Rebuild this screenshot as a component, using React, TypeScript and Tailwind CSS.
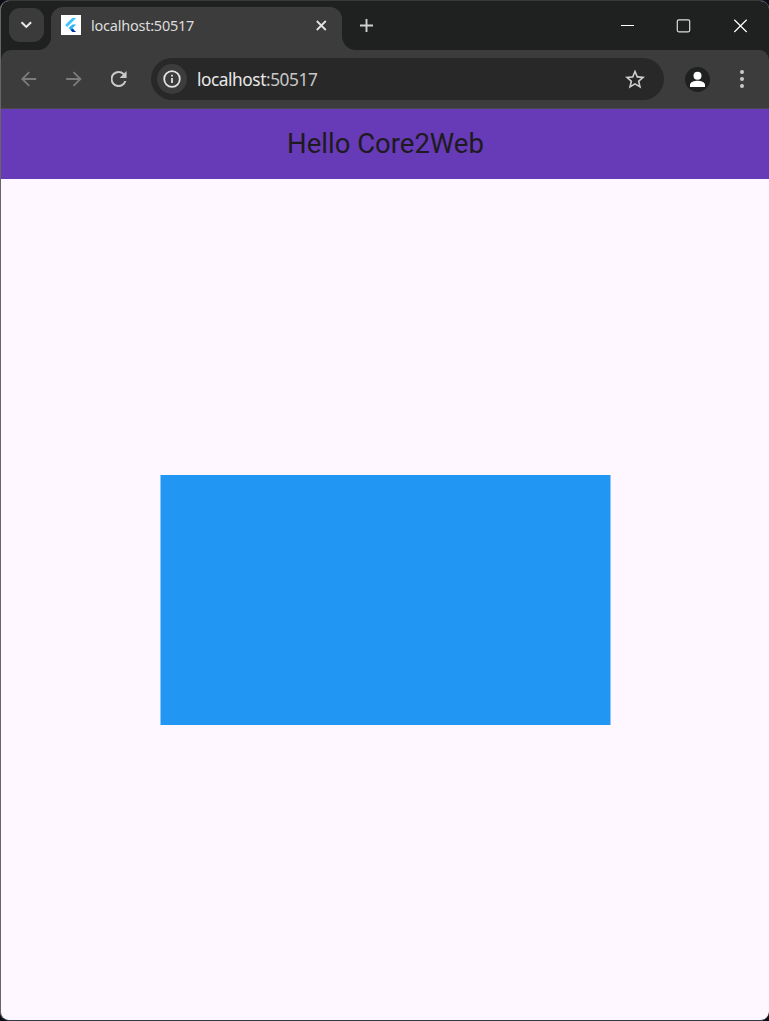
import React from 'react';

function FlutterLogo() {
  return (
    <div className="flex h-5 w-5 items-center justify-center bg-white">
      <svg width="20" height="20" viewBox="0 0 20 20">
        <path d="M4.2 10 11.2 3h4L6.2 12z" fill="#40c4ff" />
        <path d="M7.6 13.1 11.4 9.4h3.9l-3.8 3.7 1.9 1.9-1.9 1.9z" fill="#29b6f6" />
        <path d="m9.6 15.1 1.9-1.4 3.6 3.4h-3.7z" fill="#01359b" />
      </svg>
    </div>
  );
}

function TabStrip() {
  return (
    <div className="flex h-[49px] bg-[#1f2120]">
      <div className="ml-2 mt-[7px] flex h-[34px] w-[35px] items-center justify-center rounded-[11px] bg-[#3b3b3b]">
        <svg width="13" height="8" viewBox="0 0 13 8" fill="none" stroke="#e8e8e8" strokeWidth="2.1">
          <path d="m1.5 1.3 4.8 4.6 4.8-4.6" />
        </svg>
      </div>
      <svg className="-ml-1.5 self-end" width="13" height="13" viewBox="0 0 13 13">
        <path d="M13 0v13H0A13 13 0 0 0 13 0Z" fill="#3c3c3c" />
      </svg>
      <div className="mt-1.5 flex w-[291px] rounded-t-[12px] bg-[#3c3c3c]">
        <div className="ml-[10px] mt-2"><FlutterLogo /></div>
        <span className="ml-[10px] mt-2 flex-1 whitespace-nowrap font-['Noto_Sans',sans-serif] text-[14.5px] leading-[20px] tracking-[-0.23px] text-[#dcdcdc]">
          localhost:50517
        </span>
        <svg className="mr-[15px] mt-[13px]" width="11" height="11" viewBox="0 0 11 11" stroke="#e3e3e3" strokeWidth="1.8">
          <path d="m.8 1 9 9M9.8 1l-9 9" />
        </svg>
      </div>
      <svg className="self-end" width="14" height="14" viewBox="0 0 14 14">
        <path d="M0 0v14h14A14 14 0 0 1 0 0Z" fill="#3c3c3c" />
      </svg>
      <svg className="ml-1 mt-[18px]" width="13" height="13" viewBox="0 0 13 13" stroke="#d0d0d0" strokeWidth="1.9">
        <path d="M6.5 0v13M0 6.5h13" />
      </svg>
      <div className="ml-auto mr-[21px] mt-[17px] flex h-[15px] items-center gap-[42px]">
        <svg width="13" height="15" viewBox="0 0 13 15" stroke="#fff">
          <path d="M0 7.5h13" />
        </svg>
        <svg width="15" height="15" viewBox="0 0 15 15" fill="none" stroke="#dedede" strokeWidth="1.2">
          <rect x="1.3" y="1.8" width="12.4" height="12" rx="1.5" />
        </svg>
        <svg width="15" height="15" viewBox="0 0 15 15" stroke="#fff" strokeWidth="1.2">
          <path d="m1.3 1.8 12.4 12.2M13.7 1.8 1.3 14" />
        </svg>
      </div>
    </div>
  );
}

function Toolbar() {
  return (
    <div className="bg-[#1f2120]">
      <div className="flex h-[59px] items-center rounded-t-[10px] border-b border-[#4a4a4a] bg-[#3c3c3c]">
        <svg className="ml-5" width="16" height="16" viewBox="0 0 16 16" fill="none" stroke="#7c7c7c" strokeWidth="1.8">
          <path d="M15.2 8H1.5M8.2 1.1 1.3 8l6.9 6.9" />
        </svg>
        <svg className="ml-[29px]" width="16" height="16" viewBox="0 0 16 16" fill="none" stroke="#7c7c7c" strokeWidth="1.8">
          <path d="M.2 8h14.3M7.5 1.1 14.4 8l-6.9 6.9" />
        </svg>
        <svg className="ml-[29px]" width="16" height="16" viewBox="4.4 4 16 16" fill="#c9c9c9">
          <path d="M17.65 6.35A7.96 7.96 0 0 0 12 4a8 8 0 1 0 7.73 10h-2.08A6 6 0 1 1 12 6c1.66 0 3.14.69 4.22 1.78L13 11h7V4z" />
        </svg>
        <div className="ml-6 flex h-[42px] w-[513px] items-center rounded-full bg-[#282828]">
          <div className="ml-1.5 flex h-[30px] w-[30px] items-center justify-center rounded-full bg-[#3c3c3c]">
            <svg width="18" height="18" viewBox="0 0 18 18" fill="none" stroke="#e3e3e3" strokeWidth="1.8">
              <circle cx="9" cy="9" r="7.8" />
              <path d="M9 8v5M9 4.8v1.8" />
            </svg>
          </div>
          <div className="ml-[10px] flex-1 whitespace-nowrap pt-0.5 font-['Noto_Sans',sans-serif] text-[17.3px] leading-[24px] tracking-[-0.45px] text-[#e8e8e8]">
            localhost<span className="text-[#c7c7c7]">:50517</span>
          </div>
          <svg className="mr-[19px]" width="20" height="20" viewBox="2 1.5 20 20" fill="#cfcfcf">
            <path d="m22 9.24-7.19-.62L12 2 9.19 8.63 2 9.24l5.46 4.73L5.82 21 12 17.27 18.18 21l-1.63-7.03zM12 15.4l-3.76 2.27 1-4.28-3.32-2.88 4.38-.38L12 6.1l1.71 4.04 4.38.38-3.32 2.88 1 4.28z" />
          </svg>
        </div>
        <svg className="ml-[21px]" width="25" height="25" viewBox="0 0 25 25">
          <circle cx="12.5" cy="12.5" r="12.5" fill="#1f2120" />
          <circle cx="12.5" cy="8.7" r="4" fill="#fff" />
          <path d="M5 20v-2.2c0-2.7 4.4-4.1 7.5-4.1s7.5 1.4 7.5 4.1V20z" fill="#fff" />
        </svg>
        <svg className="ml-[30px]" width="4" height="18" viewBox="0 0 4 18" fill="#c9c9c9">
          <circle cx="2" cy="2" r="2" /><circle cx="2" cy="9" r="2" /><circle cx="2" cy="16" r="2" />
        </svg>
      </div>
    </div>
  );
}

export default function App() {
  return (
    <div className="h-[1021px] w-[769px] bg-[#0b0d16]">
      <div className="flex h-full flex-col overflow-hidden rounded-[9px] border-b border-l border-t border-b-[#303848] border-l-[#666666] border-t-[#38393b] bg-[#fef7ff]">
        <TabStrip />
        <Toolbar />
        <header className="flex h-[70px] items-center justify-center bg-[#673ab7] pl-px font-[Roboto,sans-serif] text-[27.5px] text-[#1d1b20]">
          Hello Core2Web
        </header>
        <main className="flex flex-1 items-center justify-center">
          <div className="h-[250px] w-[450px] translate-x-[0.5px] bg-[#2196f3]" />
        </main>
      </div>
    </div>
  );
}
